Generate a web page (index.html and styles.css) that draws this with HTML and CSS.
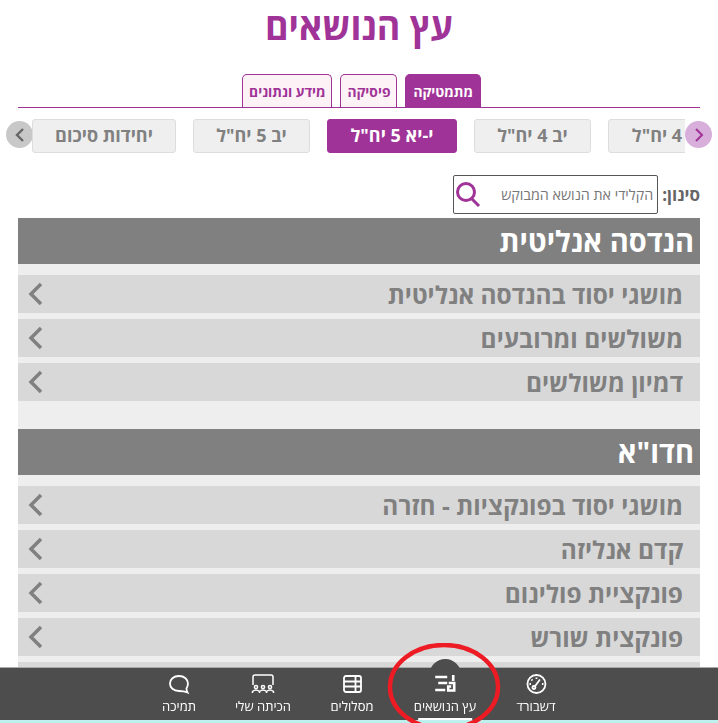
FILE: index.html
```html
<!DOCTYPE html>
<html lang="he" dir="rtl">
<head>
  <meta charset="UTF-8">
  <meta name="viewport" content="width=device-width, initial-scale=1.0">
  <title>עץ הנושאים</title>
  <link rel="stylesheet" href="styles.css">
</head>
<body>
  <div class="page">
    <h1 class="title">עץ הנושאים</h1>

    <!-- Subject tabs -->
    <div class="tabs">
      <div class="tab active">מתמטיקה</div>
      <div class="tab">פיסיקה</div>
      <div class="tab">מידע ונתונים</div>
    </div>

    <!-- Level chips -->
    <div class="levels">
      <div class="arrow arrow-next">
        <svg width="10" height="16" viewBox="0 0 10 16"><path d="M2 2 L8 8 L2 14" fill="none" stroke="#a03397" stroke-width="2"/></svg>
      </div>
      <div class="chip-list">
        <div class="chip chip-first">4 יח"ל</div>
        <div class="chip chip-mid">יב 4 יח"ל</div>
        <div class="chip chip-active">י-יא 5 יח"ל</div>
        <div class="chip chip-mid">יב 5 יח"ל</div>
        <div class="chip chip-last">יחידות סיכום</div>
      </div>
      <div class="arrow arrow-prev">
        <svg width="10" height="16" viewBox="0 0 10 16"><path d="M8 2 L2 8 L8 14" fill="none" stroke="#666" stroke-width="2.4"/></svg>
      </div>
    </div>

    <!-- Filter -->
    <div class="filter">
      <label class="filter-label">סינון:</label>
      <div class="filter-box">
        <span class="filter-text">הקלידי את הנושא המבוקש</span>
        <svg class="filter-icon" width="26" height="28" viewBox="0 0 26 28"><circle cx="11" cy="11" r="8.5" fill="none" stroke="#a03397" stroke-width="3"/><path d="M17 18 L24 25" stroke="#a03397" stroke-width="3" fill="none"/></svg>
      </div>
    </div>

    <div class="section">
      <div class="section-head">הנדסה אנליטית</div>
      <div class="rows">
        <div class="row"><span>מושגי יסוד בהנדסה אנליטית</span><svg class="chev" width="16" height="24" viewBox="0 0 16 24"><path d="M13 2 L3 12 L13 22" fill="none" stroke="#808080" stroke-width="3.5"/></svg></div>
        <div class="row"><span>משולשים ומרובעים</span><svg class="chev" width="16" height="24" viewBox="0 0 16 24"><path d="M13 2 L3 12 L13 22" fill="none" stroke="#808080" stroke-width="3.5"/></svg></div>
        <div class="row"><span>דמיון משולשים</span><svg class="chev" width="16" height="24" viewBox="0 0 16 24"><path d="M13 2 L3 12 L13 22" fill="none" stroke="#808080" stroke-width="3.5"/></svg></div>
      </div>
    </div>

    <div class="section">
      <div class="section-head">חדו"א</div>
      <div class="rows">
        <div class="row"><span>מושגי יסוד בפונקציות - חזרה</span><svg class="chev" width="16" height="24" viewBox="0 0 16 24"><path d="M13 2 L3 12 L13 22" fill="none" stroke="#808080" stroke-width="3.5"/></svg></div>
        <div class="row"><span>קדם אנליזה</span><svg class="chev" width="16" height="24" viewBox="0 0 16 24"><path d="M13 2 L3 12 L13 22" fill="none" stroke="#808080" stroke-width="3.5"/></svg></div>
        <div class="row"><span>פונקציית פולינום</span><svg class="chev" width="16" height="24" viewBox="0 0 16 24"><path d="M13 2 L3 12 L13 22" fill="none" stroke="#808080" stroke-width="3.5"/></svg></div>
        <div class="row"><span>פונקצית שורש</span><svg class="chev" width="16" height="24" viewBox="0 0 16 24"><path d="M13 2 L3 12 L13 22" fill="none" stroke="#808080" stroke-width="3.5"/></svg></div>
        <div class="row"></div>
      </div>
    </div>
  </div>

  <!-- Bottom navigation -->
  <div class="bottom-nav">
    <div class="nav-item nav-dashboard">
      <svg width="24" height="24" viewBox="0 0 24 24" fill="none" stroke="#fff" stroke-width="1.8"><circle cx="12" cy="12" r="9"/><path d="M10 15 L15.500 7.500 M12 5.500 V7 M7 7.500 L8 8.500 M5 12 H6.500 M17.500 12 H19"/><circle cx="9.500" cy="15.500" r="1.500"/></svg>
      <span>דשבורד</span>
    </div>
    <div class="nav-item nav-tree">
      <div class="nav-bump"></div>
      <svg class="tree-icon" width="24" height="24" viewBox="0 0 24 24" fill="none" stroke="#fff" stroke-width="2.600"><path d="M2 5 H14 M5 11 H14 M2 18 H12 M20 3 V9 M15.500 11 H21 V18.500 H15 V14.500 H18"/></svg>
      <span>עץ הנושאים</span>
      <div class="nav-line"></div>
    </div>
    <div class="nav-item nav-tracks">
      <svg width="24" height="24" viewBox="0 0 24 24" fill="none" stroke="#fff" stroke-width="1.800"><rect x="3.500" y="4" width="17" height="16" rx="2"/><path d="M3.500 9.500 H20.500 M3.500 14.500 H20.500 M15 4 V20"/></svg>
      <span>מסלולים</span>
    </div>
    <div class="nav-item nav-class">
      <svg width="26" height="24" viewBox="0 0 26 24" fill="none" stroke="#fff" stroke-width="1.500"><path d="M3 13 V5 Q3 3 5 3 H21 Q23 3 23 5 V13"/><circle cx="6" cy="15" r="1.600"/><circle cx="13" cy="15" r="1.600"/><circle cx="20" cy="15" r="1.600"/><path d="M2.500 21 V19.500 Q6 16.500 9.500 19.500 V21 M9.500 19.500 Q13 16.500 16.500 19.500 V21 M16.500 19.500 Q20 16.500 23.500 19.500 V21"/></svg>
      <span>הכיתה שלי</span>
    </div>
    <div class="nav-item nav-support">
      <svg width="24" height="24" viewBox="0 0 24 24" fill="none" stroke="#fff" stroke-width="1.800"><path d="M12 4 C6.500 4 3 7.500 3 11.500 C3 15.500 6.500 19 12 19 C14 19 17 19 20.500 20.500 C19.500 18.500 19.500 17.500 19.500 16.500 C20.500 15 21 13.500 21 11.500 C21 7.500 17.500 4 12 4 Z"/></svg>
      <span>תמיכה</span>
    </div>
    <svg class="red-circle" width="120" height="90" viewBox="0 0 120 90"><ellipse cx="59" cy="44" rx="54" ry="42" fill="none" stroke="#ed1c24" stroke-width="4.500"/></svg>
  </div>
</body>
</html>
```

FILE: styles.css
```css
html, body {
  margin: 0;
  padding: 0;
  height: 723px;
  overflow: hidden;
  background-color: #fff;
}

body {
  font-family: "Open Sans", "Liberation Sans", sans-serif;
}

.page {
  padding: 0 18px;
}

.title {
  margin: 0;
  height: 74px;
  font-size: 38px;
  line-height: 50px;
  font-weight: 700;
  color: #a03397;
  text-align: center;
  transform: scaleX(0.945);
}

/* Tabs */
.tabs {
  display: flex;
  gap: 8px;
  height: 33px;
  padding-right: 219px;
  border-bottom: 1px solid #a03397;
}

.tab {
  padding: 0 6px;
  border: 1px solid #a03397;
  border-bottom: none;
  border-radius: 5px 5px 0 0;
  background-color: #fdf2f6;
  color: #a03397;
  font-size: 13.800px;
  font-weight: 700;
  line-height: 34px;
}

.tab.active {
  padding: 0 7px;
  background-color: #a03397;
  color: #fff;
}

/* Level chips */
.levels {
  display: flex;
  align-items: center;
  margin: 10px -12px 0;
  height: 36px;
}

.arrow {
  flex: 0 0 27px;
  height: 27px;
  margin-top: -3px;
  border-radius: 50%;
  display: flex;
  align-items: center;
  justify-content: center;
  z-index: 1;
}

.arrow-next {
  background-color: #d8aedb;
}

.arrow-prev {
  background-color: #c8c8c8;
  margin-right: -1px;
  z-index: 0;
}

.chip-list {
  flex: 1;
  display: flex;
  gap: 17px;
  height: 36px;
  padding-top: 1px;
  box-sizing: border-box;
  overflow: hidden;
  z-index: 1;
}

.chip {
  flex: 0 0 auto;
  box-sizing: border-box;
  height: 34px;
  border: 1px solid #ddd;
  border-radius: 3px;
  background-color: #efefef;
  color: #808080;
  font-size: 18px;
  font-weight: 700;
  line-height: 30px;
  text-align: center;
}

.chip-first {
  width: 98px;
  margin-right: -21px;
}

.chip-mid {
  width: 117px;
}

.chip-active {
  width: 130px;
  background-color: #a03397;
  border-color: #a03397;
  color: #fff;
}

.chip-last {
  width: 144px;
}

/* Filter */
.filter {
  display: flex;
  align-items: center;
  gap: 4px;
  margin-top: 21px;
  height: 39px;
  margin-bottom: 4px;
}

.filter-label {
  font-size: 17px;
  font-weight: 700;
  color: #666;
}

.filter-box {
  box-sizing: border-box;
  width: 205px;
  height: 39px;
  display: flex;
  align-items: center;
  justify-content: space-between;
  padding: 0 4px 0 1px;
  border: 1px solid #555;
  border-radius: 2px;
}

.filter-text {
  font-size: 14.300px;
  color: #777;
}

/* Topic sections */
.section-head {
  height: 46px;
  padding: 0 6px;
  background-color: #808080;
  color: #fff;
  font-size: 29px;
  font-weight: 700;
  line-height: 46px;
}

.rows {
  display: flex;
  flex-direction: column;
  gap: 6px;
  padding: 11px 0 28px;
  background-color: #eee;
}

.row {
  flex: 0 0 38px;
  display: flex;
  align-items: center;
  justify-content: space-between;
  padding: 0 17px 0 10px;
  background-color: #d8d8d8;
  color: #808080;
  font-size: 24.400px;
  font-weight: 700;
}

/* Bottom navigation */
.bottom-nav {
  position: fixed;
  left: 0;
  right: 0;
  top: 667px;
  height: 53px;
  box-sizing: border-box;
  border-top: 1px solid #aaa;
  background-color: #4d4d4d;
  color: #fff;
  box-shadow: 0 3px 0 #bff0f0;
}

.nav-item {
  position: absolute;
  top: 4px;
  display: flex;
  flex-direction: column;
  align-items: center;
  transform: translateX(50%);
  font-size: 13px;
  line-height: 18px;
  white-space: nowrap;
}

.nav-item span {
  margin-top: 1px;
}

.nav-dashboard { right: 182px; }
.nav-tree { right: 273px; }
.nav-tracks { right: 366px; }
.nav-class { right: 455px; }
.nav-support { right: 539px; }

.tree-icon {
  margin-left: 1px;
}

.nav-bump {
  position: absolute;
  top: -13px;
  left: 50%;
  width: 32px;
  height: 32px;
  margin-left: -16px;
  border-radius: 50%;
  background-color: #4d4d4d;
  z-index: -1;
}

.nav-line {
  position: absolute;
  left: 4px;
  right: 4px;
  bottom: -5px;
  height: 2px;
  background-color: #fff;
}

.red-circle {
  position: absolute;
  left: 385px;
  top: -25px;
}
```
